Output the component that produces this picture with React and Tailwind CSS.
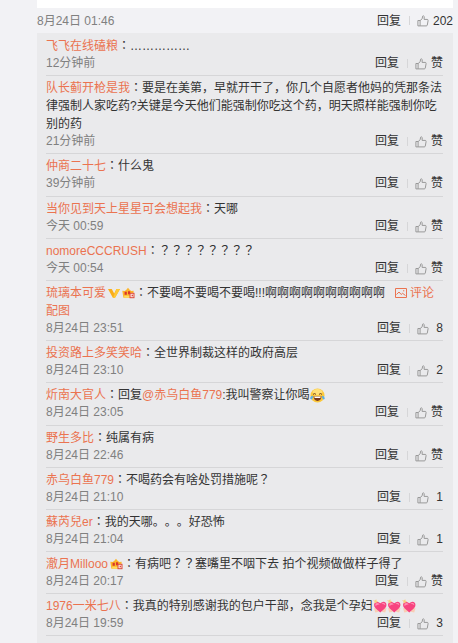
import clsx from 'clsx';

const COMMENTS = [
  { name: '飞飞在线磕粮', time: '12分钟前', body: '……………' },
  {
    name: '队长蓟开枪是我',
    time: '21分钟前',
    body: '要是在美第，早就开干了，你几个自愿者他妈的凭那条法律强制人家吃药?关键是今天他们能强制你吃这个药，明天照样能强制你吃别的药'
  },
  { name: '仲商二十七', time: '39分钟前', body: '什么鬼', tall: true },
  { name: '当你见到天上星星可会想起我', time: '今天 00:59', body: '天哪' },
  { name: 'nomoreCCCRUSH', time: '今天 00:54', body: <Centered>？？？？？？？？</Centered> },
  {
    name: '琉璃本可爱',
    badges: ['v', 'crown'],
    time: '8月24日 23:51',
    body: (
      <>
        不要喝不要喝不要喝!!!啊啊啊啊啊啊啊啊啊啊
        <a className="ml-2.5 text-[#eb7350]">
          <PictureIcon />
          评论配图
        </a>
      </>
    ),
    likes: 8
  },
  { name: '投资路上多笑笑哈', time: '8月24日 23:10', body: '全世界制裁这样的政府高层', likes: 2 },
  {
    name: '炘南大官人',
    time: '8月24日 23:05',
    body: (
      <>
        回复<a className="text-[#eb7350]">@赤乌白鱼779</a>:我叫警察让你喝
        <JoyIcon />
      </>
    ),
    tall: true
  },
  { name: '野生多比', time: '8月24日 22:46', body: '纯属有病' },
  {
    name: '赤乌白鱼779',
    time: '8月24日 21:10',
    body: (
      <>
        不喝药会有啥处罚措施呢<Centered>？</Centered>
      </>
    ),
    likes: 1
  },
  { name: '蘇芮兒er', time: '8月24日 21:04', body: '我的天哪。。。好恐怖', likes: 1 },
  {
    name: '澈月Millooo',
    badges: ['crown'],
    time: '8月24日 20:17',
    body: (
      <>
        有病吧<Centered>？？</Centered>塞嘴里不咽下去 拍个视频做做样子得了
      </>
    )
  },
  {
    name: '1976一米七八',
    time: '8月24日 19:59',
    body: (
      <>
        我真的特别感谢我的包户干部，念我是个孕妇
        <HeartIcon />
        <HeartIcon />
        <HeartIcon />
      </>
    ),
    likes: 3
  }
];

// The TC face puts full-width punctuation in the middle of its cell
function Centered({ children }) {
  return <span className="font-['Noto_Sans_CJK_TC',sans-serif] leading-none">{children}</span>;
}

function ThumbIcon() {
  return (
    <svg className="mt-px size-3 shrink-0" viewBox="0 0 12 12" fill="none" stroke="#999" strokeLinejoin="round">
      <path d="M.9 5.5h2.2v5.4H.9z" />
      <path d="M3.1 5.6 5.2 3.7 5.6 1.2Q6.6.4 7.2 1.5L7.1 4.4h3.2q1 .2.8 1.2l-.8 4.4q-.2.9-1 .9H3.1" />
    </svg>
  );
}

function PictureIcon() {
  return (
    <svg className="mr-[3px] inline-block h-[10px] w-3 align-[-1px]" viewBox="0 0 12 10" fill="none" stroke="#eb7350">
      <path d="M.5.5h11v9H.5z" />
      <path d="m1.5 6.5 2.5-2.5 2.2 2.5 1.4-1.2 2.9 2.2" />
      <path d="M8 2.8h1.3" />
    </svg>
  );
}

function VIcon() {
  return (
    <svg className="ml-0.5 inline-block h-[9px] w-3 align-[-1px]" viewBox="0 0 12 9">
      <path d="M0 0h3.8l2.4 4.4L8.4 0H12L6.9 9H5z" fill="#f9ae1b" />
      <path d="M8.4 0H12L6.9 9H5z" fill="#ffc936" />
    </svg>
  );
}

function CrownIcon() {
  return (
    <svg className="ml-0.5 inline-block h-3 w-[13px] align-[-2px]" viewBox="0 0 13 12">
      <path d="M.3 3.8 2.8 4 4.6 2.6 6 .8l1.4 1.8L9.2 4l2.5-.2-.9 7H1.4z" fill="#fdb52b" />
      <path d="M2.2 8.7h6v2h-6z" fill="#ffdc62" />
      <path d="M2.6 4.8h2.2v3H2.6zM6 4.3h2.2v3H6z" fill="#d9352b" />
      <path d="M7.5 5.8h5v5.4h-5z" fill="#dc4a3c" />
      <path d="M8.5 6.8h3v3.4h-3z" fill="#fbe5df" />
      <path d="M9.7 7.8h1.2v1.5H9.7z" fill="#d9352b" />
    </svg>
  );
}

function JoyIcon() {
  return (
    <svg className="inline-block size-[15px] align-[-4px]" viewBox="0 0 15 15">
      <circle cx="7.5" cy="7.5" r="7" fill="#fbc83c" />
      <ellipse cx="7.5" cy="4" rx="5" ry="3" fill="#ffe078" />
      <path d="M3 6.4q1.5-1.8 3 0M9 6.4q1.5-1.8 3 0" fill="none" stroke="#70421a" />
      <path d="M3.5 8.3h8q-.4 4.6-4 4.6t-4-4.6z" fill="#7b3a1c" />
      <path d="M4.2 8.6h6.6l-.5 1.3H4.7z" fill="#fff" />
      <path d="M.2 10.5Q.3 8 3 7.8q.2 3-1.3 3.7-1 .2-1.5-1zM14.8 10.5Q14.7 8 12 7.8q-.2 3 1.3 3.7 1 .2 1.5-1z" fill="#58aee4" />
    </svg>
  );
}

function HeartIcon() {
  return (
    <svg className="inline-block h-[15px] w-[14.5px] align-[-4px]" viewBox="0 0 15 15">
      <path d="M1 9.2 4 9l2 4-3.6.6zM14 9.2 11 9l-2 4 3.6.6z" fill="#f9cdb4" />
      <path d="M7.5 13.8 2.6 9.4Q.2 6.6 1.6 4q2.4-2.8 5.9.2Q11 1.2 13.4 4q1.4 2.6-1 5.4z" fill="#f7447f" />
      <path d="M2.6 7Q1.8 4 4.6 3.8q1.8 0 2.4 1.6Q4.4 5 2.6 7zM8.7 5q1.2-1.6 2.9-1.1 1.3.7 1 2.4Q11 4.600 8.7 5z" fill="#ff8fb2" />
      <path d="m0 .8 1.800.5L3.400 0l.4 1.700 1.500.8-1.600.9-2 .9-.1-1.700z" fill="#f8cf83" />
    </svg>
  );
}

function Actions({ likes, className }) {
  return (
    <div className="flex items-center text-[#333]">
      <a>回复</a>
      <span className="mr-[7px] ml-2 h-[9px] w-px bg-[#d6d6d8]" />
      <ThumbIcon />
      <span className={clsx('text-right', className || (likes ? 'w-3.5' : 'w-4'))}>{likes || '赞'}</span>
    </div>
  );
}

function Comment({ name, badges = [], time, body, likes, tall }) {
  return (
    <li className={clsx('border-b border-[#d6d6d8] pt-[3px]', tall ? 'pb-[5px]' : 'pb-1')}>
      <p className="leading-[18px] break-all">
        <a className="text-[#eb7350]">{name}</a>
        {badges.includes('v') && <VIcon />}
        {badges.includes('crown') && <CrownIcon />}
        <Centered>：</Centered>
        {body}
      </p>
      <div className="flex h-4 items-center justify-between leading-4">
        <span className="text-[#808080]">{time}</span>
        <Actions likes={likes} />
      </div>
    </li>
  );
}

export default function App() {
  return (
    <div className="h-[643px] overflow-hidden bg-[#f2f2f5] pr-[5px] pl-[37px] font-['Liberation_Sans','Noto_Sans_CJK_SC',sans-serif] text-xs text-[#333] [text-spacing-trim:space-all]">
      <div className="h-2 bg-white" />
      <div className="flex h-[25px] items-center justify-between">
        <span className="text-[#808080]">8月24日 01:46</span>
        <Actions likes={202} className="w-6" />
      </div>
      <ul className="h-[610px] bg-[#eaeaec] pt-px pr-2.5 pl-[9px]">
        {COMMENTS.map((comment) => (
          <Comment key={comment.name} {...comment} />
        ))}
      </ul>
    </div>
  );
}
